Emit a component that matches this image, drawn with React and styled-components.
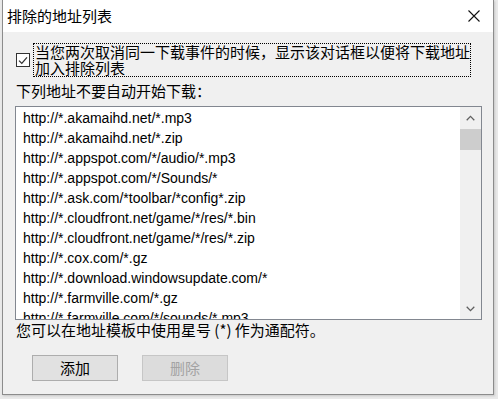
import styled, { createGlobalStyle } from "styled-components";

const GlobalStyle = createGlobalStyle`
  html, body {
    margin: 0;
    padding: 0;
    background: #e9e9e9;
    overflow: hidden;
  }
  body {
    font-family: "Noto Sans CJK SC", "Liberation Sans", sans-serif;
  }
`;

const cjk = `"Noto Sans CJK SC", "Liberation Sans", sans-serif`;
const latin = `"Liberation Sans", "Noto Sans CJK SC", sans-serif`;

const Desktop = styled.div`
  width: 498px;
  height: 399px;
  padding: 0 4px 0 2px;
  box-sizing: border-box;
`;

const Window = styled.div`
  width: 492px;
  height: 395px;
  box-sizing: border-box;
  border: 1px solid #8c8c8c;
  border-top: none;
  background: #f0f0f0;
  display: flex;
  flex-direction: column;
  box-shadow: 1px 1px 2px rgba(0, 0, 0, 0.15);
`;

const TitleBar = styled.div`
  height: 32px;
  flex: none;
  background: #ffffff;
  display: flex;
  align-items: center;
  justify-content: space-between;
  padding-left: 4px;
`;

const Title = styled.span`
  font-family: ${cjk};
  font-size: 15px;
  line-height: 20px;
  color: #000;
`;

const CloseIcon = styled.svg`
  width: 12px;
  height: 12px;
  margin-right: 13px;
`;

const Body = styled.div`
  display: flex;
  flex-direction: column;
  padding: 0 12px 0 13px;
`;

const CheckRow = styled.label`
  margin-top: 11px;
  display: flex;
  align-items: center;
  gap: 3px;
`;

const Box = styled.span`
  width: 14px;
  height: 14px;
  box-sizing: border-box;
  border: 1px solid #333333;
  background: #ffffff;
  display: flex;
  align-items: center;
  justify-content: center;
  flex: none;
`;

const CheckText = styled.span`
  width: 438px;
  box-sizing: border-box;
  border: 1px dotted #000;
  padding-left: 1px;
  font-family: ${cjk};
  font-size: 15px;
  line-height: 16px;
  color: #000;
  white-space: nowrap;
`;

const Label = styled.div`
  margin-top: 6px;
  font-family: ${cjk};
  font-size: 15px;
  line-height: 16px;
  color: #000;
  white-space: nowrap;
`;

const ListBox = styled.div`
  margin-top: 7px;
  margin-left: -1px;
  width: 467px;
  height: 214px;
  box-sizing: border-box;
  border: 1px solid #828790;
  background: #ffffff;
  display: flex;
`;

const Items = styled.ul`
  flex: 1;
  margin: 0;
  padding: 1px 0 0 7px;
  list-style: none;
  overflow: hidden;
`;

const Item = styled.li`
  height: 20px;
  line-height: 20px;
  font-family: ${latin};
  font-size: 14px;
  color: #000;
  white-space: nowrap;
`;

const ScrollBar = styled.div`
  width: 21px;
  flex: none;
  background: #f0f0f0;
  display: flex;
  flex-direction: column;
`;

const Arrow = styled.div`
  height: 21px;
  display: flex;
  align-items: center;
  justify-content: center;
  flex: none;
`;

const Track = styled.div`
  flex: 1;
  padding-top: 1px;
`;

const Thumb = styled.div`
  height: 21px;
  background: #cdcdcd;
`;

const Hint = styled.div`
  margin-top: 1px;
  font-family: ${cjk};
  font-size: 15px;
  line-height: 17px;
  color: #000;
  white-space: nowrap;
`;

const Buttons = styled.div`
  margin-top: 17px;
  margin-left: 16px;
  display: flex;
  gap: 24px;
`;

const Button = styled.button`
  width: 86px;
  height: 26px;
  box-sizing: border-box;
  padding: 0;
  font-family: ${cjk};
  font-size: 15px;
  line-height: 20px;
  color: ${(p) => (p.disabled ? "#a3a3a3" : "#000")};
  background: ${(p) => (p.disabled ? "#dcdcdc" : "#e1e1e1")};
  border: 1px solid ${(p) => (p.disabled ? "#c6c6c6" : "#adadad")};
  border-radius: 0;
`;

const urls = [
  "http://*.akamaihd.net/*.mp3",
  "http://*.akamaihd.net/*.zip",
  "http://*.appspot.com/*/audio/*.mp3",
  "http://*.appspot.com/*/Sounds/*",
  "http://*.ask.com/*toolbar/*config*.zip",
  "http://*.cloudfront.net/game/*/res/*.bin",
  "http://*.cloudfront.net/game/*/res/*.zip",
  "http://*.cox.com/*.gz",
  "http://*.download.windowsupdate.com/*",
  "http://*.farmville.com/*.gz",
  "http://*.farmville.com/*/sounds/*.mp3",
  "http://*.farmville.com/*/*.swf",
];

export default function App() {
  return (
    <>
      <GlobalStyle />
      <Desktop>
        <Window>
          <TitleBar>
            <Title>排除的地址列表</Title>
            <CloseIcon viewBox="0 0 12 12">
              <path d="M0.5 0.5 L11.5 11.5 M11.5 0.5 L0.5 11.5" stroke="#111" strokeWidth="1.1" fill="none" />
            </CloseIcon>
          </TitleBar>
          <Body>
            <CheckRow>
              <Box>
                <svg width="10" height="9" viewBox="0 0 10 9">
                  <path d="M1 4.6 L3.8 7.4 L9 1.4" stroke="#333" strokeWidth="1.3" fill="none" />
                </svg>
              </Box>
              <CheckText>
                当您两次取消同一下载事件的时候，显示该对话框以便将下载地址
                <br />
                加入排除列表
              </CheckText>
            </CheckRow>
            <Label>下列地址不要自动开始下载：</Label>
            <ListBox>
              <Items>
                {urls.map((u) => (
                  <Item key={u}>{u}</Item>
                ))}
              </Items>
              <ScrollBar>
                <Arrow>
                  <svg width="9" height="6" viewBox="0 0 9 6">
                    <path d="M0.7 5.2 L4.5 1.4 L8.3 5.2" stroke="#606060" strokeWidth="1.3" fill="none" />
                  </svg>
                </Arrow>
                <Track>
                  <Thumb />
                </Track>
                <Arrow>
                  <svg width="9" height="6" viewBox="0 0 9 6">
                    <path d="M0.7 0.8 L4.5 4.6 L8.3 0.8" stroke="#606060" strokeWidth="1.3" fill="none" />
                  </svg>
                </Arrow>
              </ScrollBar>
            </ListBox>
            <Hint>您可以在地址模板中使用星号 (*) 作为通配符。</Hint>
            <Buttons>
              <Button>添加</Button>
              <Button disabled>删除</Button>
            </Buttons>
          </Body>
        </Window>
      </Desktop>
    </>
  );
}
